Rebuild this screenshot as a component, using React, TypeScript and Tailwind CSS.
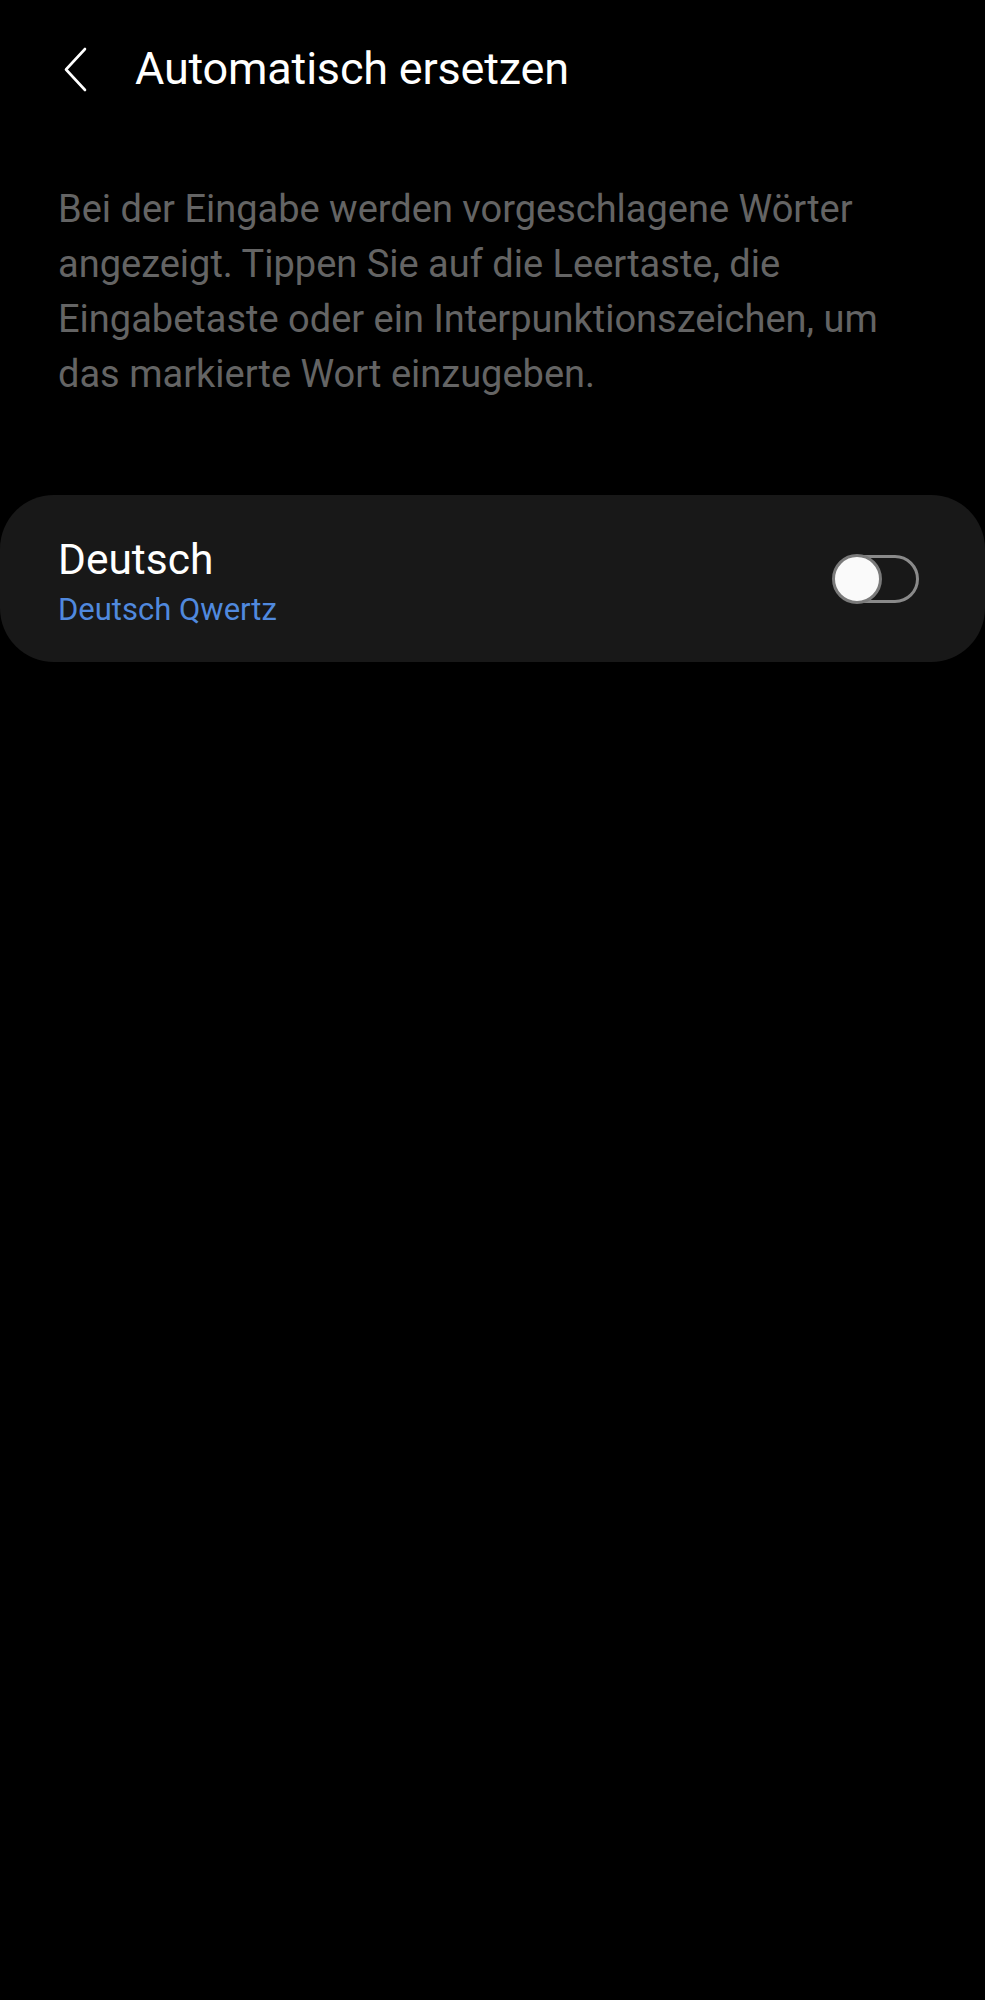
import { useState } from 'react';

export default function App() {
  const [enabled, setEnabled] = useState(false);

  return (
    <div className="min-h-[2000px] w-full bg-black font-['Roboto','Noto_Sans',sans-serif]">
      {/* Header */}
      <div className="flex items-center pt-[43px] pl-[62px]">
        <button className="flex h-[44px] w-[26px] items-center justify-center text-white">
          <svg width="24" height="45" viewBox="0 0 24 45" fill="none">
            <path d="M22 2 L3 22.5 L22 43" stroke="#ffffff" strokeWidth="2.6" strokeLinecap="round" strokeLinejoin="round" />
          </svg>
        </button>
        <h1 className="ml-[47px] text-[45px] leading-[52px] font-normal text-white tracking-[-0.2px]">
          Automatisch ersetzen
        </h1>
      </div>

      {/* Description */}
      <p className="mt-[87px] pl-[58px] pr-[72px] text-[38px] leading-[55px] text-[#646464]">
        Bei der Eingabe werden vorgeschlagene Wörter angezeigt. Tippen Sie auf die Leertaste, die Eingabetaste oder ein Interpunktionszeichen, um das markierte Wort einzugeben.
      </p>

      {/* Language card */}
      <div className="mt-[93px] flex h-[167px] items-center justify-between rounded-[54px] bg-[#181818] pl-[58px] pr-[66px]">
        <div className="flex flex-col pt-[6px]">
          <span className="text-[42.5px] leading-[50px] text-white">Deutsch</span>
          <span className="mt-[6px] text-[31px] leading-[38px] text-[#5089de]">Deutsch Qwertz</span>
        </div>
        <button
          type="button"
          onClick={() => setEnabled(!enabled)}
          className="relative h-[48px] w-[87px]"
        >
          <div className="absolute inset-y-0 left-[2px] right-0 rounded-full border-[3px] border-[#8a8a8a]" />
          <div className={`absolute top-[-1px] h-[50px] w-[50px] rounded-full border-[3px] border-[#7a7a7a] bg-[#fafafa] ${enabled ? 'right-0' : 'left-0'}`} />
        </button>
      </div>
    </div>
  );
}
